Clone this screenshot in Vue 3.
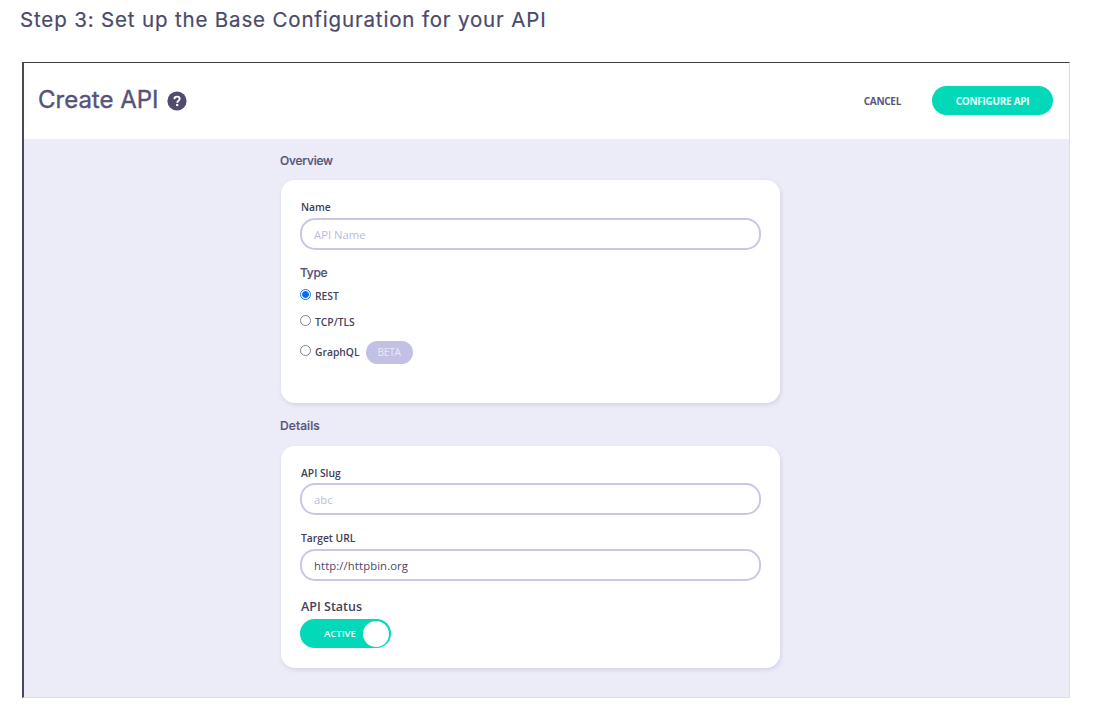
<script setup>
import { ref } from 'vue'

const name = ref('')
const slug = ref('')
const target = ref('http://httpbin.org')
const type = ref('REST')
const types = [
  { id: 'REST', cls: 'rest' },
  { id: 'TCP/TLS', cls: 'tcp' },
  { id: 'GraphQL', cls: 'graphql', badge: 'BETA' },
]
</script>

<template>
  <main class="page">
    <h2 class="step">Step 3: Set up the Base Configuration for your API</h2>
    <section class="frame">
      <header class="bar">
        <h1 class="title">Create API</h1>
        <svg class="help" viewBox="0 0 20 20">
          <circle cx="10" cy="10" r="9.6" fill="#4f4c70" />
          <path d="M7.3 8.1C7.4 6.4 8.5 5.6 10 5.6C11.6 5.6 12.7 6.5 12.7 7.8C12.7 9.7 10.2 9.6 10.2 11.7" fill="none" stroke="#fff" stroke-width="1.9" />
          <circle cx="10.2" cy="14.1" r="1.25" fill="#fff" />
        </svg>
        <button class="cancel"><span>CANCEL</span></button>
        <button class="configure"><span>CONFIGURE API</span></button>
      </header>
      <div class="body">
        <h3 class="section overview"><span>Overview</span></h3>
        <div class="card first">
          <label class="label name"><span>Name</span></label>
          <input v-model="name" class="input wide" placeholder="API Name" />
          <h4 class="type"><span>Type</span></h4>
          <label v-for="t in types" :key="t.id" class="option" :class="t.cls">
            <i class="radio" :class="{ on: type === t.id }"></i>
            <input v-model="type" class="native" type="radio" :value="t.id" />
            <span class="option-text">{{ t.id }}</span>
            <em v-if="t.badge" class="badge">{{ t.badge }}</em>
          </label>
        </div>
        <h3 class="section details"><span>Details</span></h3>
        <div class="card second">
          <label class="label slug"><span>API Slug</span></label>
          <input v-model="slug" class="input" placeholder="abc" />
          <label class="label target"><span>Target URL</span></label>
          <input v-model="target" class="input url" />
          <label class="status">API Status</label>
          <div class="toggle"><span>ACTIVE</span><i class="knob"></i></div>
        </div>
      </div>
    </section>
  </main>
</template>

<style>
body { background: #fff; }
</style>

<style scoped>
* { box-sizing: border-box; }
.page {
  width: 1093px;
  height: 726px;
  overflow: hidden;
  font-family: "Open Sans", "Noto Sans", sans-serif;
  color: #4a4768;
}
h1, h2, h3, h4 { margin: 0; font-family: Inter, sans-serif; white-space: nowrap; }
.step {
  height: 62px;
  padding: 5px 0 0 20px;
  font-size: 20.5px;
  line-height: 30px;
  font-weight: 400;
  letter-spacing: 0.84px;
  color: #4a4a6a;
  -webkit-text-stroke: 0.2px #4a4a6a;
}
.frame {
  width: 1048px;
  height: 636px;
  margin-left: 22px;
  border-style: solid;
  border-width: 1px 1px 1px 2px;
  border-color: #3e3e44 #dcdce2 #dcdce2 #4a4860;
}
.bar { height: 76px; display: flex; align-items: center; padding: 0 16px 0 14px; }
.title { width: 121px; font-size: 24px; font-weight: 400; line-height: 30px; margin-top: -2px; color: #56537a; -webkit-text-stroke: 0.4px #56537a; }
.help { width: 20px; height: 20px; margin-left: 7.5px; margin-top: -1px; }
button { border: 0; padding: 0; background: none; font: 700 10px/28px "Open Sans", sans-serif; letter-spacing: -0.3px; white-space: nowrap; }
.cancel { margin-left: auto; margin-right: 31px; margin-top: -1px; color: #5a5778; }
.configure { width: 121px; height: 29px; margin-top: -1px; border-radius: 15px; background: #03d9b8; color: #e2fff8; }
.body { height: 558px; background: #ececf8; padding-left: 257px; }
.section { height: 41px; display: flex; align-items: center; padding-top: 2px; font-size: 12px; font-weight: 500; letter-spacing: -0.2px; color: #56537a; -webkit-text-stroke: 0.2px #56537a; }
.section span { margin-left: -1px; }
.details { height: 43px; letter-spacing: 0.1px; }
.card {
  width: 499px;
  border-radius: 14px;
  background: #fff;
  padding: 0 19px;
  box-shadow: 1px 2px 4px rgba(60, 60, 100, 0.14);
  display: flex;
  flex-direction: column;
  align-items: flex-start;
}
.first { height: 223px; padding-top: 17px; }
.second { height: 222px; padding-top: 17px; }
.label { height: 21px; font-size: 10.3px; line-height: 21px; font-weight: 600; color: #403d58; padding-left: 1px; }
.slug, .target { line-height: 20px; }
.input {
  flex: none;
  width: 461px;
  height: 32px;
  border: 2px solid #cac7e6;
  border-radius: 15px;
  padding: 0 12px;
  background: #fff;
  font: 500 11.3px/20px "Open Sans", sans-serif;
  color: #4a4768;
  outline: 0;
}
.url { letter-spacing: 0.1px; }
.input::placeholder { color: #bdbada; opacity: 1; }
.type { height: 34px; padding-top: 12px; padding-left: 0; font-size: 12px; line-height: 22px; font-weight: 500; letter-spacing: -0.3px; color: #56537a; -webkit-text-stroke: 0.2px #56537a; }
.option { display: flex; align-items: center; height: 26px; margin-top: -1px; margin-bottom: 1px; font-size: 10.3px; font-weight: 600; color: #45425e; }
.graphql { height: 34px; }
.native { position: absolute; opacity: 0; pointer-events: none; }
.radio { width: 11px; height: 11px; border: 1px solid #85838d; border-radius: 50%; margin: -3px 4px 0 0; background: #fff; }
.radio.on { border-color: #1677f5; background: radial-gradient(circle, #0a6cf5 3px, #fff 3.8px); }
.badge { width: 47px; height: 23px; margin-left: 6px; border-radius: 12px; background: #c3c0e5; color: #e9e8f8; font: 400 10px/23px "Open Sans", sans-serif; letter-spacing: -0.2px; text-align: center; }
.slug { height: 20px; }
.target { margin-top: 13px; }
.status { margin-top: 14px; padding-left: 1px; font-size: 12.5px; line-height: 23px; height: 24px; font-weight: 600; color: #45425e; }
.toggle { width: 91px; height: 29px; border-radius: 15px; background: #03d9b8; display: flex; align-items: center; justify-content: space-between; padding: 0 2px 0 24px; color: #e6fff9; font-size: 9.7px; font-weight: 600; letter-spacing: -0.1px; }
.toggle span { margin-top: -1px; }
.knob { width: 26px; height: 26px; border-radius: 50%; background: #fff; }
</style>
